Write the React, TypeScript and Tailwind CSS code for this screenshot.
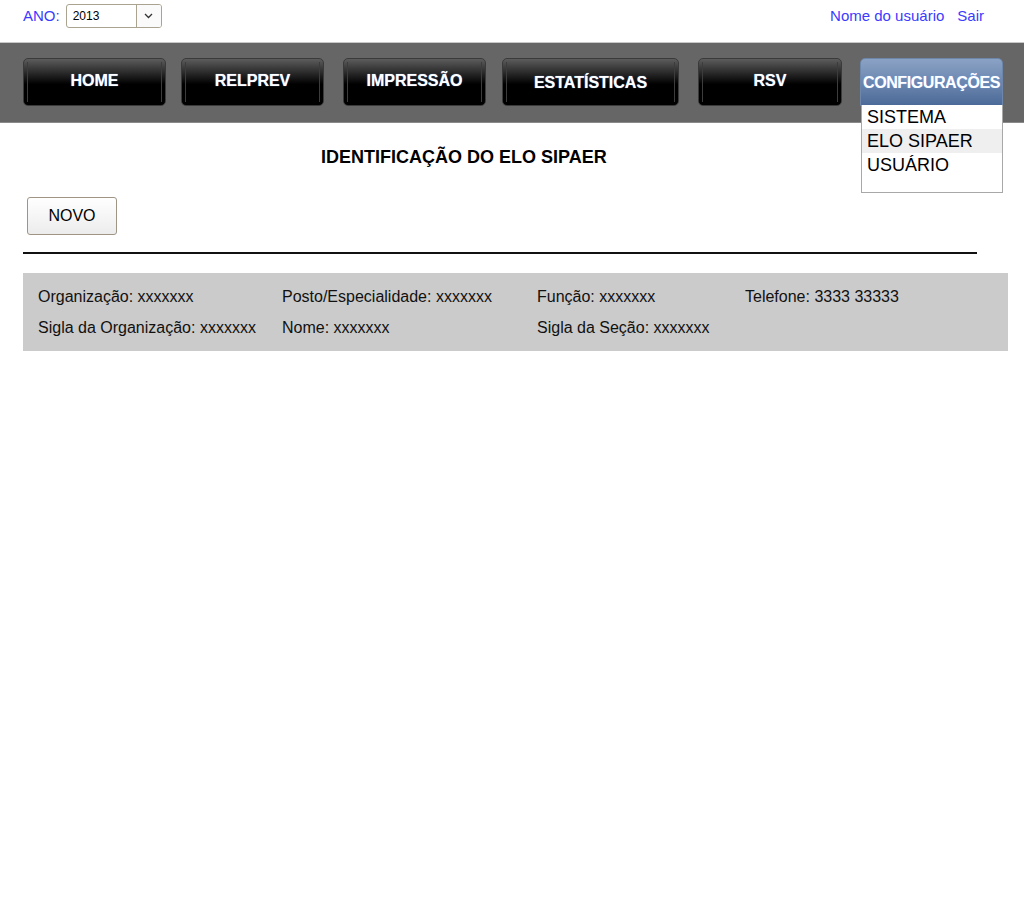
import React from "react";

const F = { fontFamily: '"Liberation Sans", Arial, sans-serif' };

function NavBtn({ label, className, textClass, active }: { label: string; className: string; textClass?: string; active?: boolean }) {
  return (
    <div
      className={
        "relative h-[48px] rounded-[5px] border flex items-center justify-center " +
        (active
          ? "border-[#6d86ab] bg-[linear-gradient(to_bottom,#8aa2c4_0%,#6f8ab2_45%,#4c6a98_100%)] h-[47px] rounded-b-none "
          : "border-[#3a3a3a] bg-[linear-gradient(to_bottom,#5c5c5c_0%,#2a2a2a_30%,#000_55%,#000_100%)] ") +
        className
      }
    >
      {!active && (
        <>
          <div className="absolute left-[3px] top-[3px] bottom-[3px] w-px bg-[#3c3c3c]" />
          <div className="absolute right-[3px] top-[3px] bottom-[3px] w-px bg-[#3c3c3c]" />
        </>
      )}
      <span
        className={
          "relative font-bold text-white whitespace-nowrap text-[16px] " +
          (textClass ?? "-mt-[3px]")
        }
        style={{ textShadow: "0 0 1px #7fb0ff" }}
      >
        {label}
      </span>
    </div>
  );
}

export default function App() {
  return (
    <div className="relative w-[1024px] h-[900px] bg-white text-[#111]" style={F}>
      {/* top bar */}
      <div className="flex items-center justify-between h-[42px] pl-[23px] pr-[40px] pb-[14px] pt-[4px]">
        <div className="flex items-center gap-[6px]">
          <span className="text-[15px] text-[#3b3bff]">ANO:</span>
          <div className="flex h-[24px] w-[96px] rounded-[3px] border border-[#aaa390] bg-white overflow-hidden">
            <div className="flex-1 flex items-center pl-[6px] text-[12px] text-black">2013</div>
            <div className="w-[25px] border-l border-[#aaa390] flex items-center justify-center bg-[#fafafa]">
              <svg width="9" height="6" viewBox="0 0 9 6">
                <path d="M1 1 L4.5 4.5 L8 1" fill="none" stroke="#333" strokeWidth="1.3" />
              </svg>
            </div>
          </div>
        </div>
        <div className="flex items-center gap-[13px] text-[15px] text-[#3b3bff]">
          <span>Nome do usuário</span>
          <span>Sair</span>
        </div>
      </div>

      {/* nav */}
      <div className="h-[81px] bg-[#666] border-t border-[#c8c8c8] border-b border-b-[#8a8a8a] flex items-start pt-[15px] pl-[23px]">
        <NavBtn label="HOME" className="w-[143px]" />
        <NavBtn label="RELPREV" className="w-[143px] ml-[15px]" />
        <NavBtn label="IMPRESSÃO" className="w-[143px] ml-[19px]" textClass="-mt-[2px]" />
        <NavBtn label="ESTATÍSTICAS" className="w-[177px] ml-[16px]" textClass="mt-[1px]" />
        <NavBtn label="RSV" className="w-[144px] ml-[19px]" />
        <NavBtn label="CONFIGURAÇÕES" className="w-[143px] ml-[18px]" textClass="tracking-[-0.4px] mt-[1px]" active />
      </div>

      {/* dropdown */}
      <div className="absolute left-[861px] top-[105px] w-[142px] h-[88px] bg-white border border-[#a8a8a8] border-t-0 text-[18px] text-black">
        <div className="h-[24px] leading-[24px] pl-[5px]">SISTEMA</div>
        <div className="h-[24px] leading-[24px] pl-[5px] bg-[#efefef]">ELO SIPAER</div>
        <div className="h-[24px] leading-[24px] pl-[5px]">USUÁRIO</div>
      </div>

      {/* title */}
      <div className="pt-[24px] pl-[321px] text-[18px] font-bold text-black leading-[20px]">
        IDENTIFICAÇÃO DO ELO SIPAER
      </div>

      <div className="pl-[27px] pt-[30px]">
        <div className="w-[90px] h-[38px] rounded-[3px] border border-[#a09484] bg-[linear-gradient(to_bottom,#ffffff,#ececec)] flex items-center justify-center text-[16px] text-black">
          NOVO
        </div>
      </div>

      <div className="ml-[23px] mt-[17px] w-[954px] h-[2px] bg-[#111]" />

      <div className="ml-[23px] mt-[19px] w-[985px] h-[78px] bg-[#cbcbcb] pl-[15px] pt-[15px] text-[16px] text-[#111]">
        <div className="grid grid-cols-[244px_255px_208px_1fr] gap-y-[13px] leading-[18px]">
          <div>Organização: xxxxxxx</div>
          <div>Posto/Especialidade: xxxxxxx</div>
          <div>Função: xxxxxxx</div>
          <div>Telefone: 3333 33333</div>
          <div>Sigla da Organização: xxxxxxx</div>
          <div>Nome: xxxxxxx</div>
          <div>Sigla da Seção: xxxxxxx</div>
          <div></div>
        </div>
      </div>
    </div>
  );
}
